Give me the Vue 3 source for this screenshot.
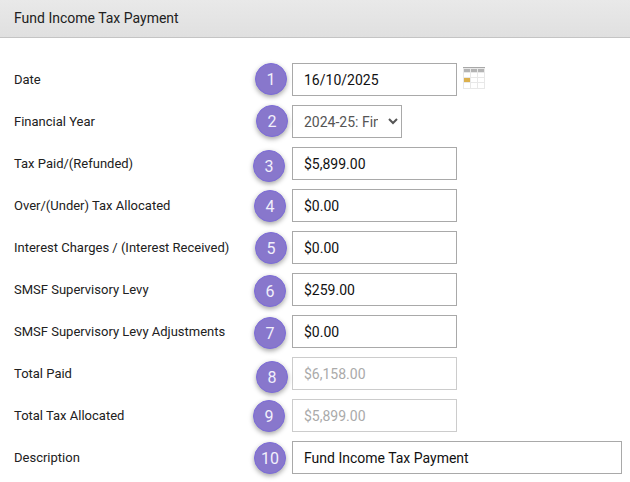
<template>
  <div class="page">
    <div class="header">Fund Income Tax Payment</div>
    <div class="form">
      <div v-for="(row, index) in rows" :key="row.label" class="row">
        <label class="label">{{ row.label }}</label>
        <div class="field">
          <select v-if="row.type === 'select'" class="select">
            <option>{{ row.value }}</option>
          </select>
          <input
            v-else
            class="input"
            :class="{ wide: row.wide }"
            :value="row.value"
            :disabled="row.disabled"
          />
          <svg v-if="row.calendar" class="calendar" width="22" height="22" viewBox="0 0 22 22">
            <rect x="0" y="0" width="22" height="22" fill="#e8e8e8" />
            <rect x="0" y="0" width="22" height="1" fill="#a8a8a8" />
            <rect x="1" y="2" width="6" height="3" fill="#b4b4b4" />
            <rect x="8" y="2" width="6" height="3" fill="#b4b4b4" />
            <rect x="15" y="2" width="6" height="3" fill="#b4b4b4" />
            <g fill="#fff">
              <rect x="1" y="6" width="6" height="4" />
              <rect x="8" y="6" width="6" height="4" />
              <rect x="15" y="6" width="6" height="4" />
              <rect x="1" y="11" width="6" height="4" fill="#dcb04c" />
              <rect x="8" y="11" width="6" height="4" />
              <rect x="15" y="11" width="6" height="4" />
              <rect x="1" y="16" width="6" height="5" />
              <rect x="8" y="16" width="6" height="5" />
              <rect x="15" y="16" width="6" height="5" />
            </g>
          </svg>
        </div>
        <span class="badge" :style="{ left: row.bx + 'px', top: row.by + 'px' }">{{ index + 1 }}</span>
      </div>
    </div>
  </div>
</template>

<script setup>
const rows = [
  { label: 'Date', value: '16/10/2025', calendar: true, bx: 255, by: 0 },
  { label: 'Financial Year', value: '2024-25: Financial Year', type: 'select', bx: 256, by: 0 },
  { label: 'Tax Paid/(Refunded)', value: '$5,899.00', bx: 253, by: 3 },
  { label: 'Over/(Under) Tax Allocated', value: '$0.00', bx: 254, by: 1 },
  { label: 'Interest Charges / (Interest Received)', value: '$0.00', bx: 255, by: 1 },
  { label: 'SMSF Supervisory Levy', value: '$259.00', bx: 254, by: 2 },
  { label: 'SMSF Supervisory Levy Adjustments', value: '$0.00', bx: 254, by: 2 },
  { label: 'Total Paid', value: '$6,158.00', disabled: true, bx: 256, by: 4 },
  { label: 'Total Tax Allocated', value: '$5,899.00', disabled: true, bx: 253, by: 1 },
  { label: 'Description', value: 'Fund Income Tax Payment', wide: true, bx: 254, by: 1 }
];
</script>

<style>
html, body {
  margin: 0;
  background: #fff;
}
</style>

<style scoped>
.page {
  width: 630px;
  height: 482px;
  overflow: hidden;
  font-family: Roboto, "Liberation Sans", sans-serif;
  color: #212121;
}

.header {
  height: 37px;
  line-height: 37px;
  padding-left: 14px;
  font-size: 14px;
  background: linear-gradient(#e9e9e9, #e0e0e0);
  border-bottom: 1px solid #c4c4c4;
}

.form {
  display: flex;
  flex-direction: column;
  gap: 9px;
  padding-top: 25px;
}

.row {
  position: relative;
  display: flex;
  align-items: center;
  height: 33px;
}

.label {
  width: 278px;
  padding-left: 14px;
  flex: none;
  box-sizing: content-box;
  font-size: 13px;
  color: #212121;
}

.field {
  display: flex;
  align-items: center;
}

.input {
  width: 165px;
  height: 33px;
  box-sizing: border-box;
  padding: 0 11px;
  border: 1px solid #a9a9a9;
  border-radius: 0;
  outline: none;
  background: #fff;
  font: 14px Roboto, "Liberation Sans", sans-serif;
  color: #111;
}

.input.wide {
  width: 330px;
}

.input:disabled {
  border-color: #ccc;
  color: #aaa;
}

.select {
  width: 110px;
  height: 33px;
  box-sizing: border-box;
  padding: 0 7px;
  border: 1px solid #a9a9a9;
  border-radius: 0;
  background: #fff;
  font: 14px Roboto, "Liberation Sans", sans-serif;
  color: #555;
}

.calendar {
  margin-left: 6px;
  margin-top: -3px;
}

.badge {
  position: absolute;
  top: 0;
  width: 32px;
  height: 32px;
  box-sizing: border-box;
  display: flex;
  align-items: center;
  justify-content: center;
  border-radius: 50%;
  border: 1px solid #7c6cd8;
  background: #8877cc;
  box-shadow: 0 2px 5px rgba(0, 0, 0, 0.35);
  color: #f2f0fb;
  font-size: 16px;
}
</style>
